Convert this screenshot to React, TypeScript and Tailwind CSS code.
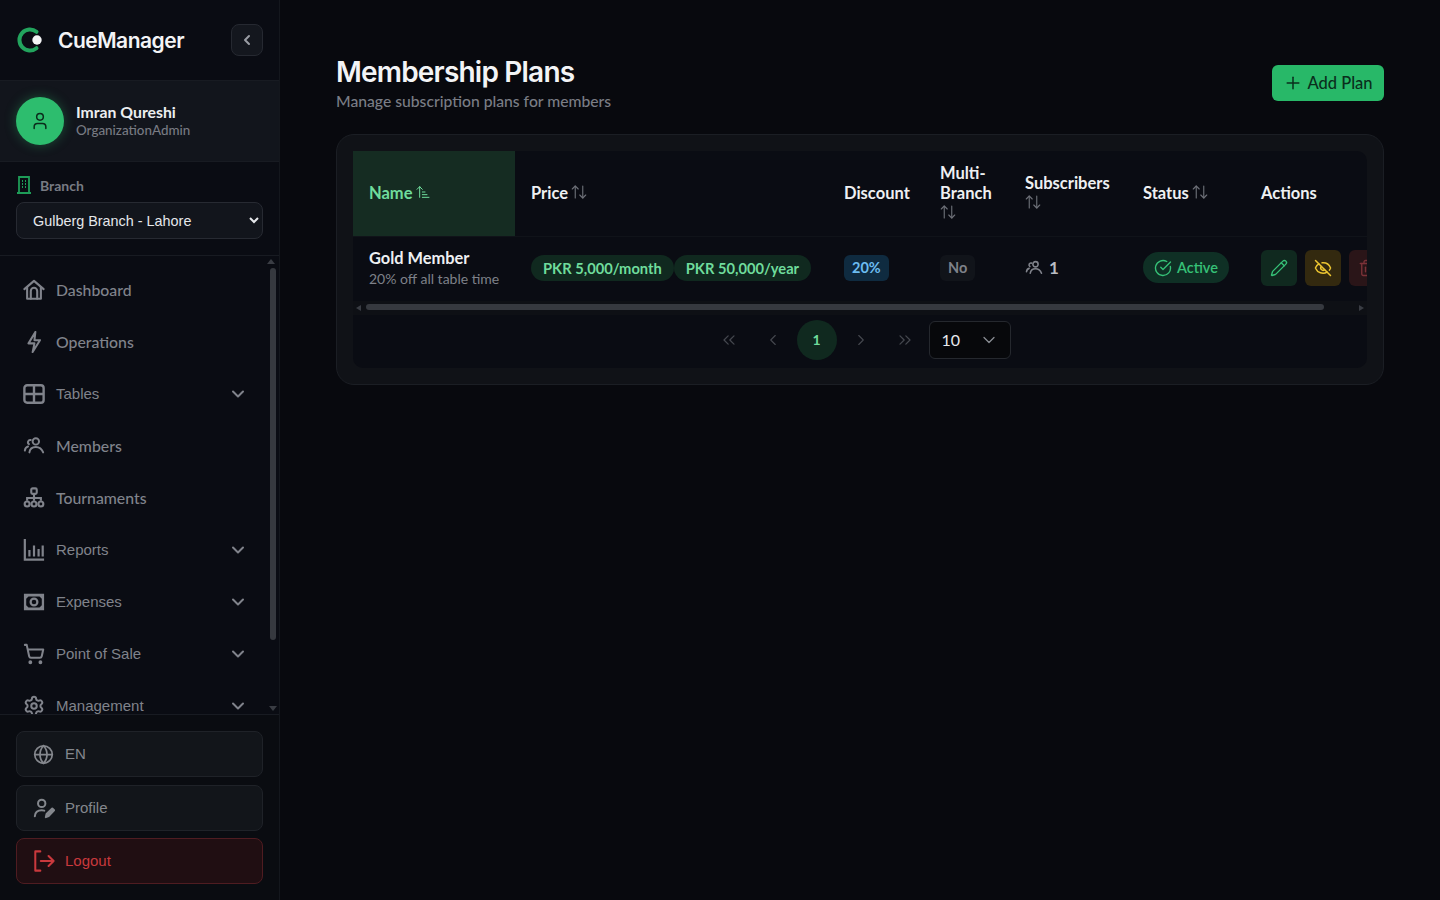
import type { ReactNode } from 'react'
import { ArrowUpDown, ArrowUpNarrowWide, ChevronDown, ChevronLeft, ChevronRight, ChevronsLeft, ChevronsRight, CircleCheckBig, EyeOff, Globe, Pencil, Plus, Settings, ShoppingCart, Trash2, User } from 'lucide-react'

const outfit = 'font-[Lato,"Noto_Sans",sans-serif]'

function Logo() {
  return (
    <svg width="26" height="26" viewBox="0 0 26 26" fill="none">
      <path d="M19.500 4.800A10.500 10.500 0 1 0 19.500 21.200" stroke="#22a45d" strokeWidth="4" strokeLinecap="round" />
      <circle cx="20" cy="13" r="4.700" fill="#f4f5f6" />
    </svg>
  )
}

function HomeIcon() {
  return (
    <svg width="22" height="22" viewBox="0 0 24 24" fill="none" stroke="currentColor" strokeWidth="2.300" strokeLinejoin="round" strokeLinecap="round">
      <path d="M1.500 11 12 2l10.500 9" />
      <path d="M4.500 9v12.500h15V9" />
      <path d="M8.500 21.500V13a3.500 3.500 0 0 1 7 0v8.500" />
    </svg>
  )
}

function BoltIcon() {
  return (
    <svg width="22" height="22" viewBox="0 0 24 24" fill="none" stroke="currentColor" strokeWidth="2.200" strokeLinejoin="round" strokeLinecap="round">
      <path d="M13.500 1 6 13.500h6.500L10.500 23 18.500 10h-6z" />
    </svg>
  )
}

function GridIcon() {
  return (
    <svg width="22" height="22" viewBox="0 0 24 24" fill="none" stroke="currentColor" strokeWidth="2.600">
      <rect x="1.500" y="2.500" width="21" height="19" rx="3" />
      <path d="M12 2.500v19M1.500 12h21" />
    </svg>
  )
}

function MembersIcon({ size = 22 }: { size?: number }) {
  return (
    <svg width={size} height={size} viewBox="0 0 24 24" fill="none" stroke="currentColor" strokeWidth="2.100" strokeLinecap="round">
      <circle cx="14" cy="7" r="3.500" />
      <path d="M7 19c.5-4 3.500-6 7-6s6.500 2 8 6" />
      <path d="M8.500 5.500a2.500 2.500 0 0 0-2 4.500" />
      <path d="M2 17c.3-2.500 1.500-4 3.500-4.500" />
    </svg>
  )
}

function TreeIcon() {
  return (
    <svg width="22" height="22" viewBox="0 0 24 24" fill="none" stroke="currentColor" strokeWidth="2.300">
      <rect x="9" y="1.500" width="6" height="6" rx="1.500" />
      <path d="M12 7.500v4.500M4.500 15v-3h15v3M12 12v3" />
      <circle cx="4.500" cy="18.500" r="2.700" />
      <circle cx="12" cy="18.500" r="2.700" />
      <circle cx="19.500" cy="18.500" r="2.700" />
    </svg>
  )
}

function ChartIcon() {
  return (
    <svg width="22" height="22" viewBox="0 0 24 24" fill="none" stroke="currentColor" strokeWidth="2.400">
      <path d="M2 0v22.500h21" />
      <path d="M7 12v7M12 7v12M17 11v8M21.500 7v12" />
    </svg>
  )
}

function CashIcon() {
  return (
    <svg width="22" height="22" viewBox="0 0 24 24" fill="none">
      <path fillRule="evenodd" clipRule="evenodd" d="M1 3h22v18H1zM6 6 3.500 8.500v7L6 18h12l2.500-2.500v-7L18 6z" fill="currentColor" />
      <circle cx="12" cy="12" r="3.700" stroke="currentColor" strokeWidth="2.400" />
    </svg>
  )
}

function ProfileIcon() {
  return (
    <svg width="22" height="22" viewBox="0 0 24 24" fill="none" stroke="currentColor" strokeWidth="2.200" strokeLinecap="round" strokeLinejoin="round">
      <circle cx="9.500" cy="7" r="4" />
      <path d="M2 21c.3-4 3-6.500 7.500-6.500 1 0 2 .1 2.800.4" />
      <path d="M14 22l.8-3.500L21 12.500l2 2-6 6.200z" fill="currentColor" />
    </svg>
  )
}

function LogoutIcon() {
  return (
    <svg width="22" height="22" viewBox="0 0 24 24" fill="none" stroke="currentColor" strokeWidth="2.200" strokeLinecap="round" strokeLinejoin="round">
      <path d="M8 1.500H2.500v21H8" />
      <path d="M8.500 12h14M17 6.500l5.500 5.500-5.500 5.500" />
    </svg>
  )
}

const navItems: { label: string; icon: ReactNode; arrow?: boolean; arial?: boolean }[] = [
  { label: 'Dashboard', icon: <HomeIcon /> },
  { label: 'Operations', icon: <BoltIcon /> },
  { label: 'Tables', icon: <GridIcon />, arrow: true, arial: true },
  { label: 'Members', icon: <MembersIcon /> },
  { label: 'Tournaments', icon: <TreeIcon /> },
  { label: 'Reports', icon: <ChartIcon />, arrow: true, arial: true },
  { label: 'Expenses', icon: <CashIcon />, arrow: true, arial: true },
  { label: 'Point of Sale', icon: <ShoppingCart size={22} strokeWidth={2.200} />, arrow: true, arial: true },
  { label: 'Management', icon: <Settings size={22} strokeWidth={2.200} />, arrow: true, arial: true },
]

function Sidebar() {
  return (
    <aside className="flex h-[900px] w-[280px] shrink-0 flex-col border-r border-[#14171d] bg-[#0a0c13]">
      <div className="flex h-[80px] shrink-0 items-center justify-between pl-[17px] pr-[16px]">
        <div className="flex items-center gap-[15px]">
          <Logo />
          <span className="pt-[1px] font-['Inter',sans-serif] text-[21px] font-semibold tracking-[-0.500px] text-[#f3f4f6]">CueManager</span>
        </div>
        <button className="flex h-[32px] w-[32px] items-center justify-center rounded-lg border border-[#262931] bg-[#14171e] text-[#9a9da4]">
          <ChevronLeft size={16} strokeWidth={3} />
        </button>
      </div>

      <div className="flex h-[82px] shrink-0 items-center gap-[12px] border-y border-[#181b22] bg-[#12151c] px-[16px]">
        <div className="flex h-[48px] w-[48px] items-center justify-center rounded-full bg-[#2dbd6e] text-[#0b2c1c] shadow-[0_0_12px_rgba(45,189,110,0.35)]">
          <User size={20} strokeWidth={1.800} />
        </div>
        <div className={outfit}>
          <div className="text-[15.800px] font-bold leading-[18px] text-[#eceef0]">Imran Qureshi</div>
          <div className="text-[13.400px] font-medium leading-[18px] text-[#787b83]">OrganizationAdmin</div>
        </div>
      </div>

      <div className="flex h-[94px] shrink-0 flex-col border-b border-[#181b22] px-[16px] pt-[14px]">
        <div className="flex h-[18px] items-center gap-[8px]">
          <svg width="16" height="18" viewBox="0 0 16 18" fill="none" stroke="#1e9c58" strokeWidth="1.800">
            <path d="M3 1h10v16H3zM1 17h14" />
            <path d="M6 5h1M9 5h1M6 8h1M9 8h1M6 11h1M9 11h1" />
          </svg>
          <span className={`${outfit} text-[14px] font-bold text-[#787b83]`}>Branch</span>
        </div>
        <select className="mt-[8px] h-[37px] w-full rounded-lg border border-[#272a32] bg-[#12151c] pl-[12px] font-['Liberation_Sans',sans-serif] text-[14.400px] text-[#e5e7eb] outline-none">
          <option>Gulberg Branch - Lahore</option>
        </select>
      </div>

      <div className="relative min-h-0 flex-1 overflow-hidden bg-[#0a0c13]">
        <div className="h-[460px] overflow-hidden pr-[16px] pt-[8px]">
          {navItems.map((item) => (
            <div key={item.label} className="flex h-[52px] items-center pl-[23px] pr-[15px] text-[#80838b]">
              <span className="flex w-[22px] justify-center">{item.icon}</span>
              <span className={`ml-[11px] flex-1 ${item.arial ? "font-['Liberation_Sans',sans-serif] text-[15px]" : `${outfit} text-[15.800px] font-medium`}`}>{item.label}</span>
              {item.arrow && <ChevronDown size={20} strokeWidth={2.400} />}
            </div>
          ))}
        </div>
        <div className="absolute right-[4px] top-[3px] h-0 w-0 border-x-[4px] border-b-[5px] border-x-transparent border-b-[#3a3d44]" />
        <div className="absolute right-[3px] top-[12px] h-[372px] w-[6px] rounded-full bg-[#36393f]" />
        <div className="absolute bottom-[3px] right-[2px] h-0 w-0 border-x-[4px] border-t-[5px] border-x-transparent border-t-[#3a3d44]" />
      </div>

      <div className="flex h-[186px] shrink-0 flex-col gap-[8px] border-t border-[#181b22] bg-[#0a0c11] px-[16px] pt-[16px] font-['Liberation_Sans',sans-serif] text-[15px]">
        <div className="flex h-[46px] items-center gap-[11px] rounded-lg border border-[#1f2228] bg-[#12151a] px-[16px] text-[#84878d]">
          <Globe size={21} strokeWidth={2} />
          EN
        </div>
        <div className="flex h-[46px] items-center gap-[10px] rounded-lg border border-[#1f2228] bg-[#12151a] px-[16px] text-[#84878d]">
          <ProfileIcon />
          Profile
        </div>
        <div className="-mt-[1px] flex h-[46px] items-center gap-[10px] rounded-lg border border-[#4f1c21] bg-[#200e12] px-[16px] text-[#c9393d]">
          <LogoutIcon />
          Logout
        </div>
      </div>
    </aside>
  )
}

function SortIcon({ stacked }: { stacked?: boolean }) {
  return <ArrowUpDown size={18} strokeWidth={1.500} className={`inline-block align-[-2px] text-[#6d7078] ${stacked ? '-ml-[1px]' : 'ml-[2px]'}`} />
}

function PlansTable() {
  return (
    <div className="rounded-[10px] bg-[#0a0c13]">
      <div className="overflow-hidden">
        <table className={`${outfit} w-[1048px] table-fixed border-collapse`}>
          <colgroup>
            <col className="w-[162px]" />
            <col className="w-[313px]" />
            <col className="w-[96px]" />
            <col className="w-[85px]" />
            <col className="w-[118px]" />
            <col className="w-[118px]" />
            <col className="w-[156px]" />
          </colgroup>
          <thead>
            <tr className="h-[85px] border-b border-[#101319] text-left text-[16.500px] leading-[20px] text-[#eef0f2]">
              <th className="bg-[#152c22] px-[16px] font-bold text-[#6fdc9c]">
                Name<ArrowUpNarrowWide size={16} strokeWidth={1.500} className="ml-[2px] inline-block align-[-1px] text-[#6fdc9c]" />
              </th>
              <th className="px-[16px] font-bold">Price<SortIcon /></th>
              <th className="px-[16px] font-bold">Discount</th>
              <th className="px-[16px] font-bold">Multi-<br />Branch<br /><SortIcon stacked /></th>
              <th className="px-[16px] font-bold">Subscribers<br /><SortIcon stacked /></th>
              <th className="px-[16px] font-bold">Status<SortIcon /></th>
              <th className="px-[16px] font-bold">Actions</th>
            </tr>
          </thead>
          <tbody>
            <tr className="h-[65px]">
              <td className="whitespace-nowrap pl-[16px]">
                <div className="text-[16.400px] font-bold leading-[20px] text-[#eef0f2]">Gold Member</div>
                <div className="mt-[1px] text-[14px] leading-[20px] text-[#7e8189]">20% off all table time</div>
              </td>
              <td className="px-[16px] pb-[2px]">
                <div className="flex text-[14.700px] font-bold text-[#6fdc9c]">
                  <span className="flex h-[26px] items-center whitespace-nowrap rounded-full bg-[#10291f] px-[12px]">PKR 5,000/month</span>
                  <span className="flex h-[26px] items-center whitespace-nowrap rounded-full bg-[#10291f] px-[12px]">PKR 50,000/year</span>
                </div>
              </td>
              <td className="px-[16px] pb-[2px]">
                <span className="inline-flex h-[26px] items-center rounded-md bg-[#0f2b40] px-[8px] text-[14.500px] font-bold text-[#6cbcf0]">20%</span>
              </td>
              <td className="px-[16px] pb-[2px]">
                <span className="inline-flex h-[26px] items-center rounded-md bg-[#11141a] px-[8px] text-[14.500px] font-bold text-[#7e8189]">No</span>
              </td>
              <td className="px-[16px] pb-[2px]">
                <span className="flex items-center gap-[6px] text-[17px] font-bold text-[#b9bcc2]">
                  <span className="text-[#80838b]"><MembersIcon size={18} /></span>1
                </span>
              </td>
              <td className="px-[16px] pb-[2px]">
                <span className="inline-flex h-[31px] items-center gap-[5px] rounded-full bg-[#0f3025] px-[11px] text-[14.500px] font-semibold text-[#36c177]">
                  <CircleCheckBig size={18} strokeWidth={1.800} />Active
                </span>
              </td>
              <td className="px-[16px] pb-[2px]">
                <div className="flex gap-[8px]">
                  <span className="flex h-[36px] w-[36px] shrink-0 items-center justify-center rounded-md bg-[#10291f] text-[#36c177]"><Pencil size={18} strokeWidth={1.800} /></span>
                  <span className="flex h-[36px] w-[36px] shrink-0 items-center justify-center rounded-md bg-[#33290f] text-[#ecc531]"><EyeOff size={18} strokeWidth={2} /></span>
                  <span className="flex h-[36px] w-[36px] shrink-0 items-center justify-center rounded-md bg-[#2a1518] text-[#7b3238]"><Trash2 size={18} strokeWidth={1.800} /></span>
                </div>
              </td>
            </tr>
          </tbody>
        </table>
      </div>

      <div className="relative h-[14px] bg-[#0e1015]">
        <div className="absolute left-[3px] top-[4px] h-0 w-0 border-y-[3.500px] border-r-[5px] border-y-transparent border-r-[#3a3d44]" />
        <div className="absolute left-[13px] top-[3px] h-[6px] w-[958px] rounded-full bg-[#36393f]" />
        <div className="absolute right-[3px] top-[4px] h-0 w-0 border-y-[3.500px] border-l-[5px] border-y-transparent border-l-[#3a3d44]" />
      </div>

      <div className="flex h-[53px] items-center justify-center pb-[3px] pr-[3px] text-[#45484f]">
        <span className="flex w-[44px] justify-center"><ChevronsLeft size={20} strokeWidth={1.500} /></span>
        <span className="flex w-[44px] justify-center"><ChevronLeft size={18} strokeWidth={1.500} /></span>
        <span className={`${outfit} mx-[2px] flex h-[40px] w-[40px] items-center justify-center rounded-full bg-[#10291f] pb-[2px] text-[14px] font-bold text-[#6fdc9c]`}>1</span>
        <span className="flex w-[44px] justify-center"><ChevronRight size={18} strokeWidth={1.500} /></span>
        <span className="flex w-[44px] justify-center"><ChevronsRight size={20} strokeWidth={1.500} /></span>
        <div className={`${outfit} ml-[2px] flex h-[38px] w-[82px] items-center justify-between rounded-md border border-[#25282e] bg-[#07080b] pl-[12px] pr-[11px] text-[16px] text-[#e8eaed]`}>
          10
          <ChevronDown size={20} strokeWidth={1.500} className="text-[#8a8d94]" />
        </div>
      </div>
    </div>
  )
}

export default function App() {
  return (
    <div className="flex h-[900px] w-[1440px] overflow-hidden bg-[#08090e]">
      <Sidebar />
      <main className="min-w-0 flex-1 px-[56px] pt-[56px]">
        <div className="flex items-start justify-between">
          <div>
            <h1 className="font-['Inter',sans-serif] text-[28px] font-semibold leading-[32px] tracking-[-0.800px] text-[#f3f4f6]">Membership Plans</h1>
            <p className={`${outfit} mt-[3px] text-[15.700px] font-medium leading-[20px] text-[#7a7d85]`}>Manage subscription plans for members</p>
          </div>
          <button className={`${outfit} mt-[9px] flex h-[36px] w-[112px] items-center justify-center gap-[4px] rounded-md bg-[#28b868] text-[16.500px] font-medium text-[#0a2e1c]`}>
            <Plus size={20} strokeWidth={1.800} />
            Add Plan
          </button>
        </div>
        <div className="mt-[23px] rounded-[18px] border border-[#1b1e24] bg-[#101217] p-[16px]">
          <PlansTable />
        </div>
      </main>
    </div>
  )
}
